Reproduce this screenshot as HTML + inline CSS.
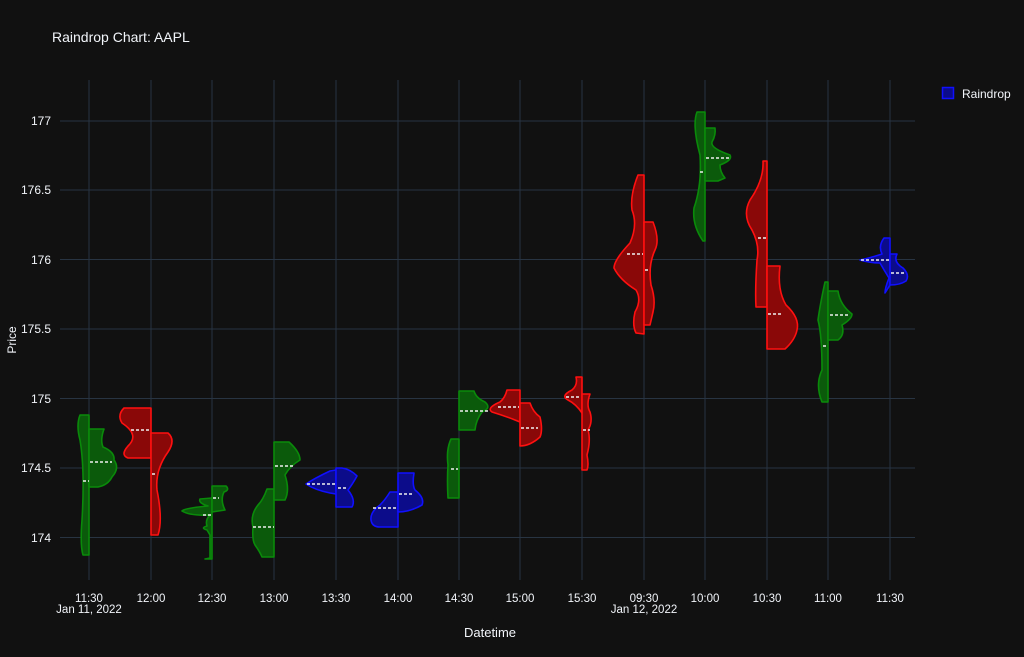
<!DOCTYPE html>
<html><head><meta charset="utf-8"><style>
body{margin:0;background:#111111;width:1024px;height:657px;overflow:hidden}
svg{display:block}
text{font-family:"Liberation Sans",sans-serif;fill:#f2f5fa}
</style></head><body>
<svg width="1024" height="657" viewBox="0 0 1024 657">
<rect width="1024" height="657" fill="#111111"/>
<g stroke="#283442" stroke-width="1">
<line x1="60" x2="915" y1="121" y2="121"/><line x1="60" x2="915" y1="190" y2="190"/><line x1="60" x2="915" y1="259.5" y2="259.5"/><line x1="60" x2="915" y1="329" y2="329"/><line x1="60" x2="915" y1="398.5" y2="398.5"/><line x1="60" x2="915" y1="468" y2="468"/><line x1="60" x2="915" y1="537.5" y2="537.5"/>
<line x1="89" x2="89" y1="80" y2="580"/><line x1="151" x2="151" y1="80" y2="580"/><line x1="212" x2="212" y1="80" y2="580"/><line x1="274" x2="274" y1="80" y2="580"/><line x1="336" x2="336" y1="80" y2="580"/><line x1="398" x2="398" y1="80" y2="580"/><line x1="459" x2="459" y1="80" y2="580"/><line x1="520" x2="520" y1="80" y2="580"/><line x1="582" x2="582" y1="80" y2="580"/><line x1="644" x2="644" y1="80" y2="580"/><line x1="705" x2="705" y1="80" y2="580"/><line x1="767" x2="767" y1="80" y2="580"/><line x1="828" x2="828" y1="80" y2="580"/><line x1="890" x2="890" y1="80" y2="580"/>
</g>
<g fill="#0b5a0b" stroke="#0a8a0a" stroke-width="1.6" stroke-linejoin="round">
<path d="M89,415 L80,415 Q76,425 80,440 Q85,470 82,520 Q80,545 83,555 L89,555 Z"/>
<path d="M89,429 L104,429 Q100,440 103,447 Q115,452 114,460 Q120,468 112,477 Q108,485 98,487 L89,487 Z"/>
<path d="M212,498 L200,499 Q198,503 208,506 Q185,508 182,511 Q190,516 210,515 Q205,520 207,526 Q200,528 207,530 L210,535 L210,558 L205,559 L212,559 Z"/>
<path d="M212,486 L226,486 Q230,490 224,492 Q220,500 225,510 L212,512 Z"/>
<path d="M274,489 L267,489 Q263,500 258,505 Q250,515 253,527 Q252,540 255,545 Q260,552 262,557 L274,557 Z"/>
<path d="M274,442 L289,442 Q300,452 300,460 Q290,466 285,475 Q290,490 285,500 L274,500 Z"/>
<path d="M459,439 L451,439 Q446,450 448,465 Q447,480 448,498 L459,498 Z"/>
<path d="M459,391 L474,391 Q476,398 485,402 Q492,408 482,412 Q476,420 475,430 L459,430 Z"/>
<path d="M705,112 L697,112 Q692,125 700,155 Q702,185 694,208 Q692,225 703,241 L705,241 Z"/>
<path d="M705,128 L715,128 Q716,135 712,142 Q710,148 730,155 Q733,160 720,165 Q720,172 725,178 L718,181 L705,181 Z"/>
<path d="M828,282 L825,282 Q820,305 818,320 Q822,335 822,370 Q815,385 822,402 L828,402 Z"/>
<path d="M828,291 L838,291 Q840,305 852,314 Q852,319 842,325 Q845,335 838,340 L828,340 Z"/>
</g>
<g fill="#8a0808" stroke="#ff1010" stroke-width="1.6" stroke-linejoin="round">
<path d="M151,408 L124,408 Q117,415 122,423 Q140,435 128,446 Q120,455 128,458 L151,458 Z"/>
<path d="M151,433 L168,433 Q176,440 168,452 Q155,470 157,490 Q163,520 158,535 L151,535 Z"/>
<path d="M520,390 L507,390 Q505,398 500,402 Q486,408 492,412 Q505,416 515,420 L520,422 Z"/>
<path d="M520,403 L530,403 Q533,412 540,417 Q543,430 540,437 Q530,446 520,446 Z"/>
<path d="M582,377 L576,377 Q578,385 572,390 Q560,396 568,400 Q576,404 582,413 Z"/>
<path d="M582,394 L590,394 Q586,405 590,412 Q593,422 588,430 Q591,440 587,455 Q589,465 587,470 L582,470 Z"/>
<path d="M644,175 L638,175 Q630,195 632,210 Q638,225 630,243 Q614,260 614,268 Q620,280 636,290 Q642,300 635,312 Q632,325 636,333 L644,334 Z"/>
<path d="M644,222 L653,222 Q660,240 655,250 Q648,265 651,285 Q656,300 653,312 L650,325 L644,325 Z"/>
<path d="M767,161 L763,161 Q764,180 750,200 Q742,215 752,230 Q760,245 757,260 Q755,290 756,307 L767,307 Z"/>
<path d="M767,266 L780,266 Q777,290 786,305 Q800,318 797,330 Q795,340 785,349 L767,349 Z"/>
</g>
<g fill="#0c0c8a" stroke="#1010ff" stroke-width="1.6" stroke-linejoin="round">
<path d="M336,470 L330,471 Q315,478 306,484 Q315,490 330,493 L336,494 Z"/>
<path d="M336,468 L342,468 Q350,469 357,476 Q352,485 348,490 Q356,500 352,507 L336,507 Z"/>
<path d="M398,492 L390,492 Q385,500 380,505 Q370,512 371,520 Q372,527 380,527 L398,527 Z"/>
<path d="M398,473 L414,473 Q412,485 415,490 Q425,498 422,505 Q410,512 398,512 Z"/>
<path d="M890,238 L884,238 Q878,246 882,254 Q870,258 860,260 Q870,263 880,263 Q884,270 889,278 Q885,288 885,293 L890,285 Z"/>
<path d="M890,254 L897,254 Q893,262 903,268 Q910,275 906,281 Q900,285 890,285 Z"/>
</g>
<g stroke="#f0f0f0" stroke-width="1.5" stroke-dasharray="3,2">
<line x1="83" x2="89" y1="481" y2="481"/><line x1="90" x2="112" y1="462" y2="462"/>
<line x1="131" x2="151" y1="430" y2="430"/><line x1="152" x2="157" y1="474" y2="474"/>
<line x1="203" x2="211" y1="515" y2="515"/><line x1="213" x2="219" y1="498" y2="498"/>
<line x1="253" x2="274" y1="527" y2="527"/><line x1="275" x2="295" y1="466" y2="466"/>
<line x1="307" x2="335" y1="484" y2="484"/><line x1="338" x2="346" y1="488" y2="488"/>
<line x1="373" x2="397" y1="508" y2="508"/><line x1="399" x2="413" y1="494" y2="494"/>
<line x1="451" x2="458" y1="469" y2="469"/><line x1="460" x2="490" y1="411" y2="411"/>
<line x1="498" x2="519" y1="407" y2="407"/><line x1="521" x2="538" y1="428" y2="428"/>
<line x1="566" x2="581" y1="397" y2="397"/><line x1="583" x2="590" y1="430" y2="430"/>
<line x1="627" x2="643" y1="254" y2="254"/><line x1="645" x2="650" y1="270" y2="270"/>
<line x1="700" x2="704" y1="172" y2="172"/><line x1="706" x2="729" y1="158" y2="158"/>
<line x1="758" x2="766" y1="238" y2="238"/><line x1="768" x2="782" y1="314" y2="314"/>
<line x1="823" x2="828" y1="346" y2="346"/><line x1="830" x2="849" y1="315" y2="315"/>
<line x1="861" x2="889" y1="260" y2="260"/><line x1="891" x2="904" y1="273" y2="273"/>
</g>
<text x="52" y="42" font-size="14">Raindrop Chart: AAPL</text>
<g font-size="12" text-anchor="end">
<text x="51" y="125">177</text><text x="51" y="194">176.5</text><text x="51" y="264">176</text><text x="51" y="333">175.5</text><text x="51" y="403">175</text><text x="51" y="472">174.5</text><text x="51" y="542">174</text>
</g>
<text x="16" y="340" font-size="12" text-anchor="middle" transform="rotate(-90 16 340)">Price</text>
<g font-size="11.5" text-anchor="middle">
<text x="89" y="602">11:30</text><text x="89" y="613">Jan 11, 2022</text>
<text x="151" y="602">12:00</text><text x="212" y="602">12:30</text><text x="274" y="602">13:00</text><text x="336" y="602">13:30</text><text x="398" y="602">14:00</text><text x="459" y="602">14:30</text><text x="520" y="602">15:00</text><text x="582" y="602">15:30</text>
<text x="644" y="602">09:30</text><text x="644" y="613">Jan 12, 2022</text>
<text x="705" y="602">10:00</text><text x="767" y="602">10:30</text><text x="828" y="602">11:00</text><text x="890" y="602">11:30</text>
<text x="490" y="637" font-size="13">Datetime</text>
</g>
<rect x="942.5" y="87.5" width="11" height="11" fill="#0c0c8a" stroke="#1010ff" stroke-width="1.5"/>
<text x="962" y="98" font-size="12">Raindrop</text>
</svg>
</body></html>
